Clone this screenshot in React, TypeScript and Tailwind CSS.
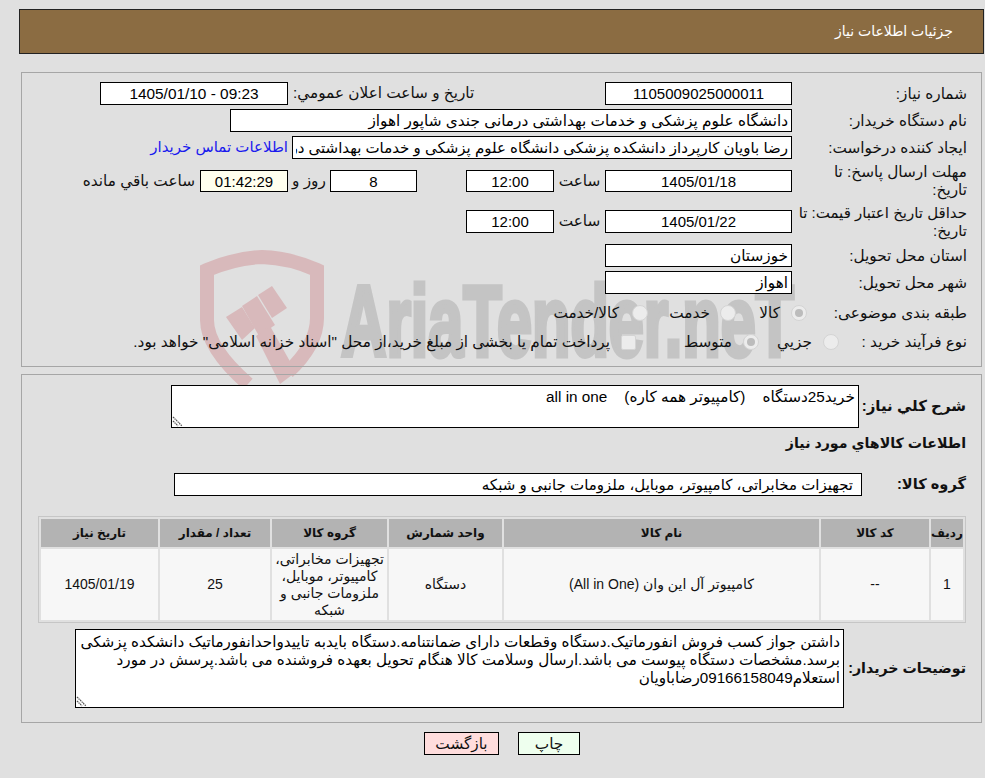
const font = "font-['Liberation_Sans','DejaVu_Sans',sans-serif]";

function Field({ value, className = "", center = true }: { value: string; className?: string; center?: boolean }) {
  return (
    <input
      readOnly
      value={value}
      className={`h-full border border-black bg-white px-[3px] text-black outline-none ${center ? "text-center text-[15px]" : "text-right"} ${className}`}
    />
  );
}

function Label({ children, className = "w-[175px]" }: { children: React.ReactNode; className?: string }) {
  return <div className={`shrink-0 pl-[3px] leading-[18px] ${className}`}>{children}</div>;
}

function Radio({ checked = false }: { checked?: boolean }) {
  return (
    <span className="flex h-[16px] w-[16px] shrink-0 items-center justify-center rounded-full border border-[#d4d4d4] bg-[#ececec]">
      {checked && <span className="h-[8px] w-[8px] rounded-full bg-[#bcbcbc]" />}
    </span>
  );
}

// resize grip of the read only text boxes
function Grip() {
  return (
    <svg className="pointer-events-none absolute bottom-[1px] left-[1px]" width="11" height="11" viewBox="0 0 11 11">
      <path d="M1 1 L10 10 M1 5 L6 10" stroke="#555" strokeWidth="1.2" strokeDasharray="1.4 0.8" fill="none" />
      <path d="M2 1 L10 9 M2 5 L6 9" stroke="#c4c4c4" strokeWidth="1" fill="none" />
    </svg>
  );
}

const columns = [
  { title: "رديف", width: 32, value: "1" },
  { title: "كد كالا", width: 108, value: "--" },
  { title: "نام كالا", width: 315, value: "كامپيوتر آل اين وان (All in One)" },
  { title: "واحد شمارش", width: 113, value: "دستگاه" },
  { title: "گروه كالا", width: 115, value: "تجهيزات مخابراتی، كامپيوتر، موبايل، ملزومات جانبی و شبكه" },
  { title: "تعداد / مقدار", width: 110, value: "25" },
  { title: "تاريخ نياز", width: 117, value: "1405/01/19" },
];

function Watermark() {
  return (
    <svg className="pointer-events-none absolute left-0 top-0" width="985" height="778" viewBox="0 0 985 778">
      <g fill="#d8b9bb">
        <path
          d="M248 384 Q207 348 207 320 L207 270 Q235 258 262 257 Q290 258 317 270 L317 318 Q317 345 288 372"
          fill="none"
          stroke="#d8b9bb"
          strokeWidth="14"
        />
        <polygon points="226,317 242,307 255,328 242,340" />
        <polygon points="242,306 257,296 275,325 259,336" />
        <polygon points="258,295 272,286 287,308 272,318" />
        <polygon points="256,336 270,326 296,372 280,384" />
      </g>
      <text
        x="341"
        y="356"
        fill="#c4c4c4"
        stroke="#c4c4c4"
        strokeWidth="5"
        fontFamily="Liberation Sans"
        fontWeight="700"
        fontSize="100"
        textLength="453"
        lengthAdjust="spacingAndGlyphs"
        direction="ltr"
      >
        AriaTender.neT
      </text>
    </svg>
  );
}

export default function App() {
  return (
    <div dir="rtl" className={`relative h-[778px] overflow-hidden bg-[#e0e0e0] text-[15.3px] text-[#111] ${font}`}>
      <Watermark />
      <div className="relative">
        {/* header */}
        <div className="ml-[19px] mr-px mt-[9px] flex h-[45px] items-center border border-[#222] bg-[#8b6c42] pr-[30px] text-[14px] text-white">
          جزئیات اطلاعات نیاز
        </div>

        {/* main info */}
        <div className="ml-[21px] mr-[3px] mt-[18px] h-[295px] border border-[#a6a6a6] pr-[14px] pt-[9px]">
          <div className="flex h-[23px] items-center">
            <Label>شماره نیاز:</Label>
            <Field value="1105009025000011" className="w-[187px]" />
            <div className="w-[317px] shrink-0 pl-[5px] text-left">تاریخ و ساعت اعلان عمومي:</div>
            <Field value="09:23 - 1405/01/10" className="w-[188px] !text-[15.4px]" />
          </div>
          <div className="mt-[4px] flex h-[23px] items-center">
            <Label>نام دستگاه خریدار:</Label>
            <Field value="دانشگاه علوم پزشكی و خدمات بهداشتی درمانی جندی شاپور اهواز" center={false} className="w-[562px]" />
          </div>
          <div className="mt-[4px] flex h-[23px] items-center">
            <Label>ایجاد کننده درخواست:</Label>
            <Field
              value="رضا باویان کارپرداز دانشکده پزشکی دانشگاه علوم پزشکی و خدمات بهداشتی درمانی جندی شاپور اهواز"
              center={false}
              className="w-[500px] text-[15px]"
            />
            <span className="mr-[4px] text-[15px] text-[#1a1aee]">اطلاعات تماس خریدار</span>
          </div>
          <div className="mt-[11px] flex h-[22px] items-center">
            <Label>
              مهلت ارسال پاسخ: تا
              <br />
              تاریخ:
            </Label>
            <Field value="1405/01/18" className="w-[187px]" />
            <span className="w-[51px] text-center">ساعت</span>
            <Field value="12:00" className="w-[88px]" />
            <div className="w-[49px]" />
            <Field value="8" className="w-[87px]" />
            <span className="w-[42px] text-center">روز و</span>
            <Field value="01:42:29" className="w-[88px] !bg-[#ffffee]" />
            <span className="mr-[5px]">ساعت باقي مانده</span>
          </div>
          <div className="mt-[18px] flex h-[23px] items-center">
            <Label className="w-[175px] text-[15px]">
              حداقل تاریخ اعتبار قیمت: تا
              <br />
              تاریخ:
            </Label>
            <Field value="1405/01/22" className="w-[187px]" />
            <span className="w-[51px] text-center">ساعت</span>
            <Field value="12:00" className="w-[88px]" />
          </div>
          <div className="mt-[11px] flex h-[23px] items-center">
            <Label>استان محل تحویل:</Label>
            <Field value="خوزستان" center={false} className="w-[187px]" />
          </div>
          <div className="mt-[4px] flex h-[23px] items-center">
            <Label>شهر محل تحویل:</Label>
            <Field value="اهواز" center={false} className="w-[187px]" />
          </div>
          <div className="mt-[8px] flex h-[22px] items-center">
            <Label className="w-[160px]">طبقه بندی موضوعی:</Label>
            <Radio checked />
            <span className="mr-[11px] w-[44px]">کالا</span>
            <Radio />
            <span className="mr-[10px] w-[62px]">خدمت</span>
            <Radio />
            <span className="mr-[13px]">کالا/خدمت</span>
          </div>
          <div className="mt-[7px] flex h-[22px] items-center">
            <Label className="w-[128px]">نوع فرآیند خرید :</Label>
            <Radio />
            <span className="mr-[11px] w-[53px]">جزيي</span>
            <Radio checked />
            <span className="mr-[11px] w-[96px]">متوسط</span>
            <span className="h-[15px] w-[15px] shrink-0 rounded-[2px] border border-[#d4d4d4] bg-[#ececec]" />
            <span className="mr-[11px] whitespace-nowrap">
              پرداخت تمام یا بخشی از مبلغ خرید،از محل "اسناد خزانه اسلامی" خواهد بود.
            </span>
          </div>
        </div>

        {/* details */}
        <div className="ml-[21px] mr-[3px] mt-[7px] h-[349px] border border-[#a6a6a6] pr-[15px] pt-[10px]">
          <div className="flex h-[43px] items-center">
            <div className="w-[107px] shrink-0 text-[15px] font-bold">شرح كلي نياز:</div>
            <div className="relative flex">
              <textarea
                readOnly
                dir="rtl"
                value="خرید25دستگاه    (کامپیوتر همه کاره)    all in one"
                className="h-[43px] w-[688px] resize-none border border-black bg-white px-[3px] pt-[2px] text-[15.3px] leading-[18px] text-black outline-none"
              />
              <Grip />
            </div>
          </div>
          <div className="mt-[6px] h-[18px] text-[14.2px] leading-[18px] font-bold">اطلاعات كالاهاي مورد نياز</div>
          <div className="mt-[21px] flex h-[23px] items-center">
            <div className="w-[104px] shrink-0 text-[14.6px] font-bold">گروه كالا:</div>
            <input
              readOnly
              value="تجهیزات مخابراتی، کامپیوتر، موبایل، ملزومات جانبی و شبکه"
              className="h-[23px] w-[688px] border border-black bg-white pr-[8px] text-[15px] text-black outline-none"
            />
          </div>
          <table className="mt-[20px] w-[928px] table-fixed border-separate border-spacing-[2px] border border-[#c6c6c6] text-center text-[14px]">
            <colgroup>
              {columns.map((c) => (
                <col key={c.title} style={{ width: c.width }} />
              ))}
            </colgroup>
            <thead>
              <tr>
                {columns.map((c) => (
                  <th key={c.title} className="h-[28px] whitespace-nowrap bg-[#b3b3b3] p-0 text-[12px] font-bold">
                    {c.title}
                  </th>
                ))}
              </tr>
            </thead>
            <tbody>
              <tr>
                {columns.map((c) => (
                  <td key={c.title} className="h-[71px] bg-[#f7f7f7] p-0 leading-[17px]">
                    {c.value}
                  </td>
                ))}
              </tr>
            </tbody>
          </table>
          <div className="mt-[6px] flex h-[79px] items-center">
            <div className="w-[122px] shrink-0 whitespace-nowrap text-[14.2px] font-bold">توضیحات خریدار:</div>
            <div className="relative flex">
              <textarea
                readOnly
                dir="rtl"
                value={
                  "داشتن جواز کسب فروش انفورماتیک.دستگاه وقطعات دارای ضمانتنامه.دستگاه بایدبه تاییدواحدانفورماتیک دانشکده پزشکی برسد.مشخصات دستگاه پیوست می باشد.ارسال وسلامت کالا هنگام تحویل بعهده فروشنده می باشد.پرسش در مورد استعلام09166158049رضاباویان"
                }
                className="h-[79px] w-[769px] resize-none border border-black bg-white px-[3px] pt-[3px] text-[15.2px] leading-[18px] text-black outline-none"
              />
              <Grip />
            </div>
          </div>
        </div>

        {/* buttons */}
        <div className="mt-[9px] flex justify-center gap-[19px] pl-[19px]">
          <button className="h-[23px] w-[62px] border border-black bg-[#eeffee]">چاپ</button>
          <button className="h-[23px] w-[75px] border border-black bg-[#ffdddd]">بازگشت</button>
        </div>
      </div>
    </div>
  );
}
